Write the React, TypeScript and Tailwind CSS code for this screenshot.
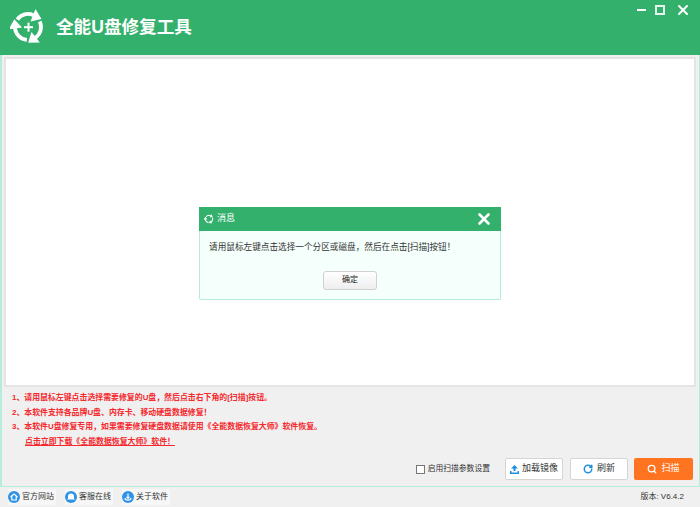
import type { ReactNode } from 'react';
import { RotateCw, Search, X } from 'lucide-react';

const font = "font-['Liberation_Sans','Noto_Sans_CJK_SC',sans-serif]";

function Logo({ size, plus = true }: { size: number; plus?: boolean }) {
  return (
    <svg width={size} height={size} viewBox="0 0 36 36" fill="#fff">
      {[0, 120, 240].map((angle) => (
        <g key={angle} transform={`rotate(${angle} 18 18)`}>
          <path d="M7.350 10.540 A13 13 0 0 1 23.500 6.200" fill="none" stroke="#fff" strokeWidth="3.800" />
          <path d="M25.500 0 L31.500 10 L20.500 12.500 Z" />
        </g>
      ))}
      {plus && <rect x="14" y="17.200" width="9" height="2" />}
      {plus && <rect x="17.500" y="13.700" width="2" height="9" />}
    </svg>
  );
}

function Notes() {
  return (
    <div className="flex flex-col pl-[10px] pt-[4px] text-[7.900px] font-bold leading-[14.500px] text-[#f5282d]">
      <p>1、请用鼠标左键点击选择需要修复的U盘，然后点击右下角的[扫描]按钮。</p>
      <p>2、本软件支持各品牌U盘、内存卡、移动硬盘数据修复！</p>
      <p>3、本软件U盘修复专用，如果需要修复硬盘数据请使用《全能数据恢复大师》软件恢复。</p>
      <p className="pl-[13px] underline">点击立即下载《全能数据恢复大师》软件！</p>
    </div>
  );
}

function FooterLink({ label, children }: { label: string; children: ReactNode }) {
  return (
    <div className="flex h-[16px] w-[48px] items-center gap-[2px] bg-[#f7f7f7] text-[8px] text-[#333]">
      <span className="flex h-[12px] w-[12px] shrink-0 items-center justify-center rounded-full bg-[#2e93e6]">{children}</span>
      {label}
    </div>
  );
}

export default function App() {
  return (
    <div className={`relative flex h-[507px] w-[700px] flex-col overflow-hidden bg-[#f0f0f0] ${font}`}>
      <header className="flex h-[55px] shrink-0 items-start justify-between bg-[#33b06c]">
        <div className="flex items-center gap-[10px] pl-[10px] pt-[9px]">
          <Logo size={36} />
          <h1 className="text-[17.600px] font-bold text-white">全能U盘修复工具</h1>
        </div>
        <div className="flex items-center pr-[9px] pt-[2px]">
          <span className="h-[2px] w-[9px] bg-white" />
          <span className="ml-[9px] h-[10px] w-[10px] border-2 border-[#e6f6ee]" />
          <X size={16} className="ml-[10px] text-white" strokeWidth={3} />
        </div>
      </header>

      <div className="flex min-h-0 flex-1 flex-col border-b border-l-2 border-r border-[#b5eddc] pt-[2px]">
        <main className="ml-[2px] mr-[3px] h-[330px] shrink-0 border-2 border-[#e4e4e4] bg-white" />
        <Notes />
        <div className="mt-auto flex items-center justify-end pb-[6px] pr-[6px]">
          <label className="mr-[15px] flex items-center gap-[3px] text-[7.800px] text-[#333]">
            <span className="h-[9px] w-[9px] border border-[#777] bg-white" />
            启用扫描参数设置
          </label>
          <button className="mr-[7px] flex h-[22px] w-[58px] items-center justify-center gap-[3px] rounded-[2px] border border-[#d5d5d5] bg-white text-[9px] text-[#333]">
            <svg width="9" height="9" viewBox="0 0 9 9" fill="#1f8fe0">
              <path d="M4.500 0 L8 3.500 H5.500 V6 H3.500 V3.500 H1 Z" />
              <path d="M0 6 H1.500 V7.500 H7.500 V6 H9 V9 H0 Z" />
            </svg>
            加载镜像
          </button>
          <button className="mr-[6px] flex h-[22px] w-[58px] items-center justify-center gap-[4px] rounded-[2px] border border-[#d5d5d5] bg-white text-[9px] text-[#333]">
            <RotateCw size={10} className="text-[#1f8fe0]" strokeWidth={3.500} />
            刷新
          </button>
          <button className="flex h-[22px] w-[59px] items-center justify-center gap-[4px] rounded-[2px] bg-[#ff7420] text-[9px] text-white">
            <Search size={10} strokeWidth={3} />
            扫描
          </button>
        </div>
      </div>

      <footer className="flex h-[20px] shrink-0 items-center justify-between pl-[8px] pr-[16px]">
        <div className="flex items-center gap-[9px]">
          <FooterLink label="官方网站">
            <svg width="8" height="8" viewBox="0 0 8 8" fill="none" stroke="#fff" strokeWidth="1.200"><path d="M.5 4 L4 1 L7.500 4 M1.800 3.500 V7 H6.200 V3.500" /></svg>
          </FooterLink>
          <FooterLink label="客服在线">
            <svg width="8" height="8" viewBox="0 0 8 8" fill="#fff"><path d="M4 .5 A3 3 0 0 1 7 3.500 V5.500 L8 6.500 H0 L1 5.500 V3.500 A3 3 0 0 1 4 .5 Z" /></svg>
          </FooterLink>
          <FooterLink label="关于软件">
            <svg width="8" height="8" viewBox="0 0 8 8" fill="none" stroke="#fff" strokeWidth="1.200"><path d="M4 .5 V5 M2.500 3.800 L4 5.300 L5.500 3.800 M1 5 C1 7.800 7 7.800 7 5" /></svg>
          </FooterLink>
        </div>
        <span className="text-[8px] text-[#333]">版本: V6.4.2</span>
      </footer>

      <div className="absolute left-[199px] top-[207px] flex h-[93px] w-[302px] flex-col rounded-b-[2px] border border-t-0 border-[#b5eddc] bg-[#f5fffb]">
        <div className="-mx-px flex h-[24px] shrink-0 items-center justify-between bg-[#33b06c] pl-[5px] pr-[8px]">
          <div className="flex items-center gap-[3px] text-[9px] text-white">
            <Logo size={10} plus={false} />
            消息
          </div>
          <X size={18} className="text-white" strokeWidth={3.500} />
        </div>
        <p className="pl-[9px] pt-[10px] text-[8.630px] text-[#333]">请用鼠标左键点击选择一个分区或磁盘，然后在点击[扫描]按钮！</p>
        <button className="mx-auto mt-[17px] h-[19px] w-[54px] rounded-[3px] border border-[#d0d0d0] bg-[linear-gradient(#fff,#eee)] text-[8px] text-[#222]">确定</button>
      </div>
    </div>
  );
}
